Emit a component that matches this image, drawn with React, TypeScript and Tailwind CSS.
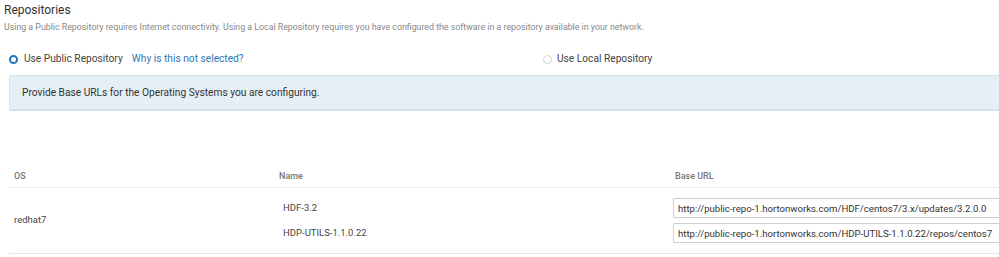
import React from 'react';

const repos = [
  { name: 'HDF-3.2', url: 'http://public-repo-1.hortonworks.com/HDF/centos7/3.x/updates/3.2.0.0' },
  { name: 'HDP-UTILS-1.1.0.22', url: 'http://public-repo-1.hortonworks.com/HDP-UTILS-1.1.0.22/repos/centos7' },
];

export default function App() {
  return (
    <div className="w-[999px] h-[257px] overflow-hidden bg-white font-['Roboto',sans-serif] text-[#333]">
      <div className="w-[1040px] pl-[4px] pt-[3px]">
        <h2 className="text-[12px] leading-[15px]">Repositories</h2>
        <p className="mt-[3px] text-[8.8px] leading-[12px] text-[#888]">
          Using a Public Repository requires Internet connectivity. Using a Local Repository requires you have configured the software in a repository available in your network.
        </p>

        <div className="mt-[19px] flex items-center pl-[5px] text-[10.2px] leading-[14px]">
          <div className="flex w-[534px] items-center">
            <span className="h-[9px] w-[9px] rounded-full border-[2.5px] border-[#2574b4] bg-white" />
            <span className="ml-[6px] text-[#444]">Use Public Repository</span>
            <span className="ml-[9px] text-[#3077b6]">Why is this not selected?</span>
          </div>
          <span className="h-[9px] w-[9px] rounded-full border border-[#d4d4d4] bg-white" />
          <span className="ml-[5px] text-[#444]">Use Local Repository</span>
        </div>

        <div className="ml-[5px] mt-[9px] h-[35px] flex items-center rounded-[2px] border border-[#d3e2ea] bg-[#e5f0f6] pl-[12px] text-[10.2px] shadow-[0_1px_0_#d6e0e6]">
          Provide Base URLs for the Operating Systems you are configuring.
        </div>

        <div className="ml-[5px] mt-[60px]">
          <div className="flex h-[18px] items-center border-b border-[#ececec] pb-[3px] text-[9px] text-[#777] font-medium">
            <div className="w-[270px] pl-[5px]">OS</div>
            <div className="w-[396px]">Name</div>
            <div>Base URL</div>
          </div>
          <div className="flex h-[66px] items-center border-b border-[#e6e6e6] text-[9.5px] text-[#444]">
            <div className="w-[270px] pl-[5px]">redhat7</div>
            <div className="flex w-[394px] flex-col gap-[13px] pl-[4px]">
              {repos.map((r) => (
                <div key={r.name} className="leading-[12px]">{r.name}</div>
              ))}
            </div>
            <div className="flex flex-col gap-[5px]">
              {repos.map((r) => (
                <input
                  key={r.name}
                  readOnly
                  value={r.url}
                  className="h-[20px] w-[360px] rounded-[1px] border border-[#cfcfcf] px-[4px] text-[9.6px] text-[#333] outline-none"
                />
              ))}
            </div>
          </div>
        </div>
      </div>
    </div>
  );
}
